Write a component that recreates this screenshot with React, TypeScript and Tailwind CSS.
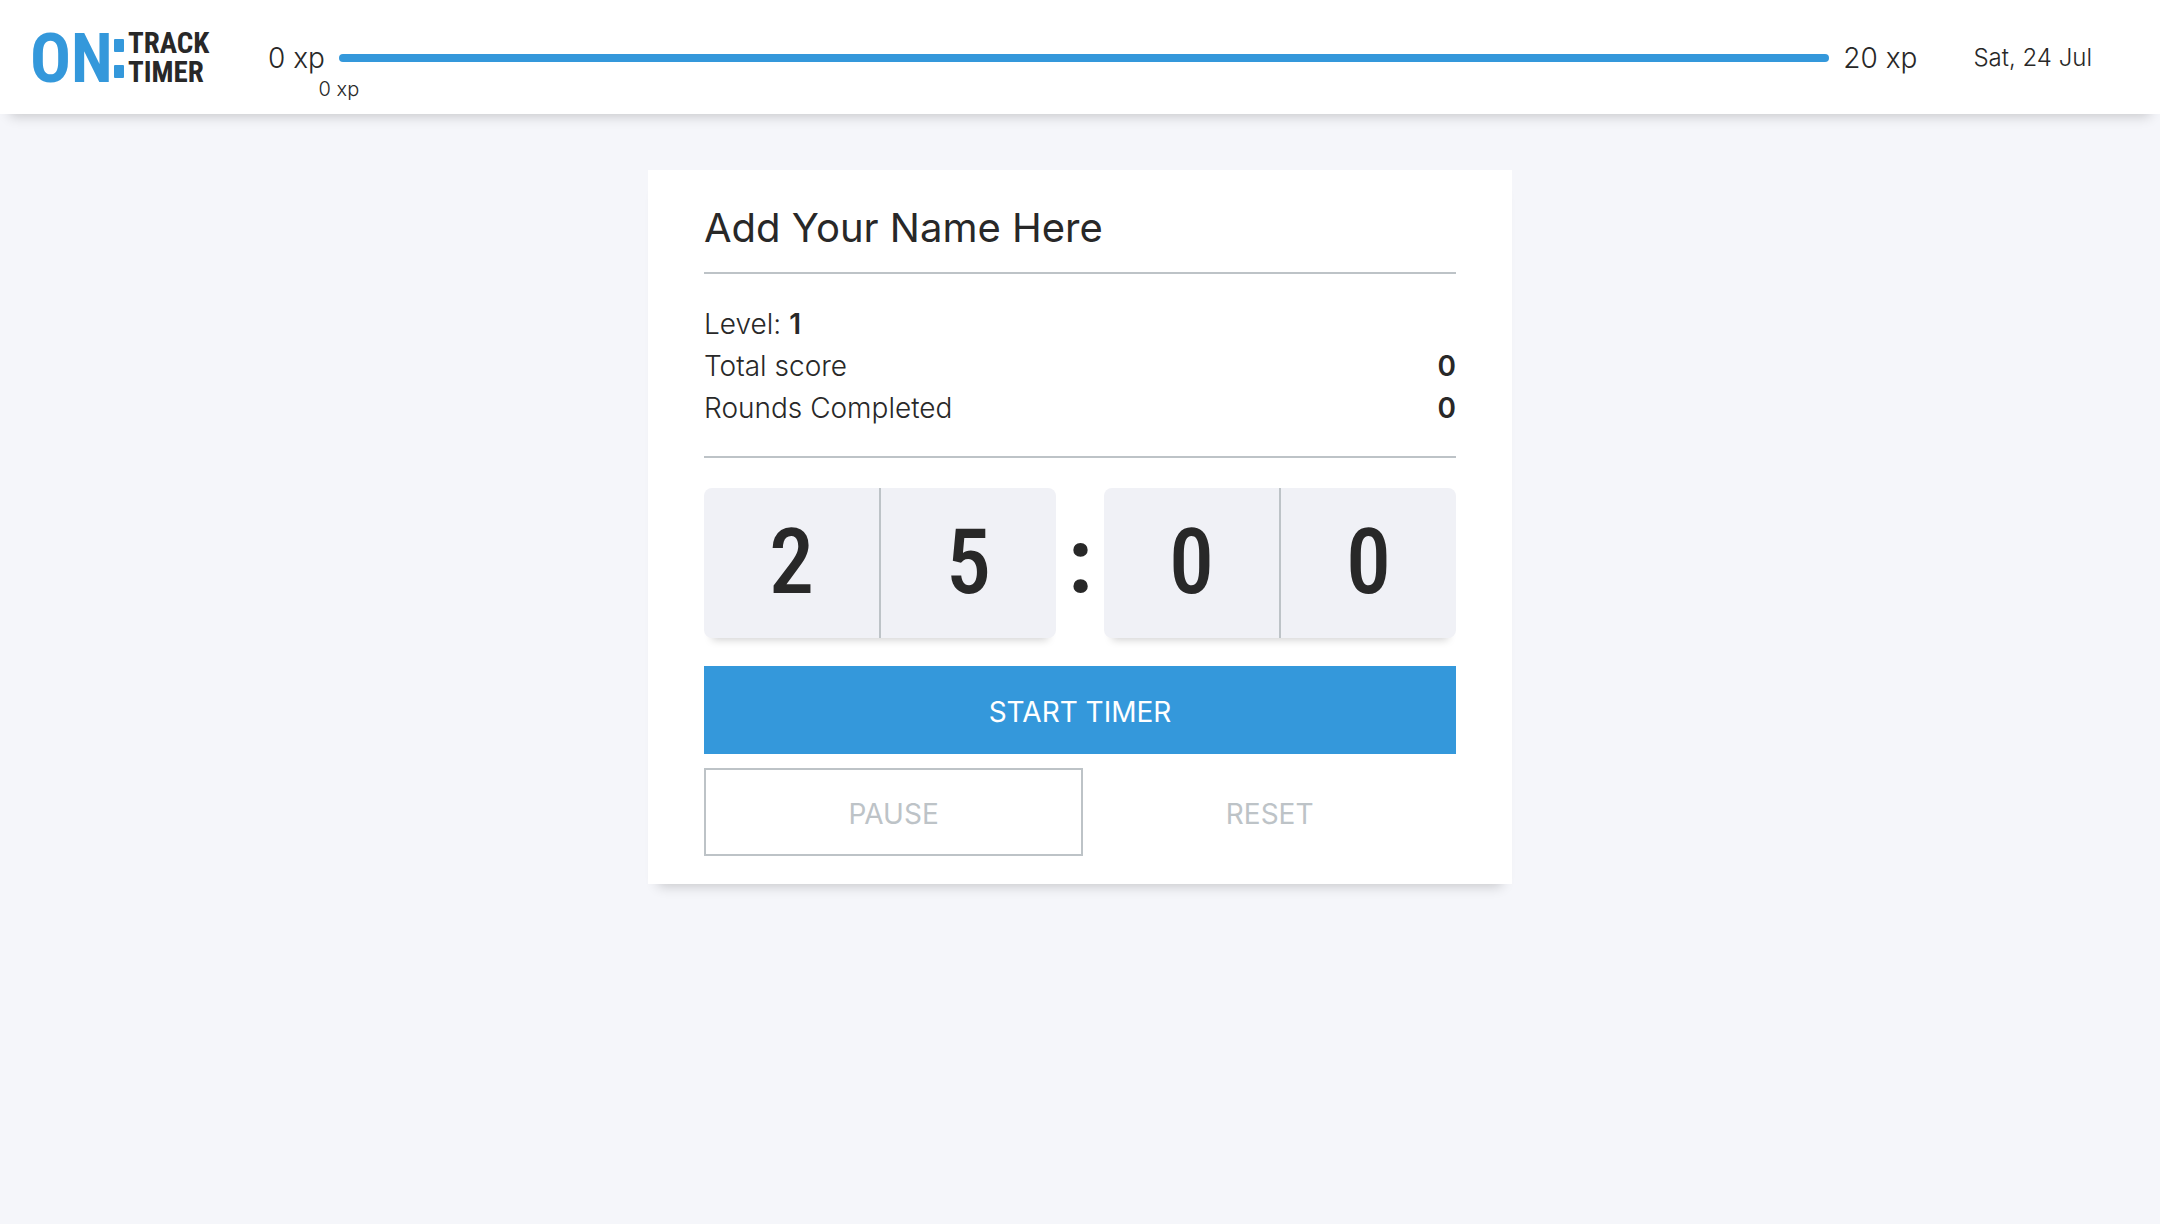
function Logo() {
  return (
    <a href="#" aria-label="On:Track Timer" className="flex shrink-0">
      <svg width="182" height="84" viewBox="0 0 182 84" aria-hidden="true" className="font-['Roboto_Condensed','Roboto',sans-serif] font-bold">
        <text x="0" y="66" fontSize="68" fill="#3498db">ON</text>
        <rect x="84" y="23" width="10" height="13" rx="1" fill="#3498db" />
        <rect x="84" y="49" width="10" height="13" rx="1" fill="#3498db" />
        <text x="98" y="37" fontSize="29" fill="#282828">TRACK</text>
        <text x="98" y="66" fontSize="29" fill="#282828">TIMER</text>
      </svg>
    </a>
  );
}

function Stat({ label, value }: { label: string; value: number }) {
  return (
    <div className="flex justify-between">
      <dt>{label}</dt>
      <dd className="font-semibold">{value}</dd>
    </div>
  );
}

function DigitPair({ digits }: { digits: string }) {
  return (
    <div className="flex h-[150px] flex-1 rounded-lg bg-[#f0f1f6] shadow-[0_10px_8px_-8px_rgba(0,0,0,0.18)]">
      <span className="flex flex-1 items-center justify-center border-r-2 border-[#bdc3c7]">{digits[0]}</span>
      <span className="flex flex-1 items-center justify-center">{digits[1]}</span>
    </div>
  );
}

export default function App() {
  return (
    <div className="min-h-screen bg-[#f5f6fa] font-['Inter',sans-serif] text-[28px] leading-[42px] font-light text-[#282828]">
      <header className="flex h-[114px] items-center bg-white pt-[2px] pr-[68px] pl-[30px] shadow-[0_12px_12px_-10px_rgba(0,0,0,0.2)]">
        <Logo />
        <div className="ml-14 flex flex-1 items-center gap-[14px]">
          <span>0 xp</span>
          <div
            role="progressbar"
            aria-label="Experience"
            aria-valuemin={0}
            aria-valuemax={20}
            aria-valuenow={0}
            className="relative h-2 flex-1 rounded-full bg-[#3498db]"
          >
            <span className="absolute top-[14px] left-0 -translate-x-1/2 text-xl leading-[42px] whitespace-nowrap">0 xp</span>
          </div>
          <span>20 xp</span>
        </div>
        <time className="ml-14 text-2xl">Sat, 24 Jul</time>
      </header>
      <main className="mx-auto mt-14 w-full max-w-[864px] bg-white px-14 py-7 shadow-[0_12px_12px_-10px_rgba(0,0,0,0.2)]">
        <h1 className="border-b-2 border-[#bdc3c7] pb-[14px] text-[40px] leading-[60px] font-normal">Add Your Name Here</h1>
        <dl className="border-b-2 border-[#bdc3c7] pt-[29px] pb-[27px]">
          <div className="flex gap-2">
            <dt>Level:</dt>
            <dd className="font-semibold">1</dd>
          </div>
          <Stat label="Total score" value={0} />
          <Stat label="Rounds Completed" value={0} />
        </dl>
        <div role="timer" className="mt-[30px] flex items-center font-['Roboto_Condensed','Roboto',sans-serif] text-[90px] leading-none font-medium">
          <DigitPair digits="25" />
          <span className="w-12 text-center font-bold">:</span>
          <DigitPair digits="00" />
        </div>
        <button type="button" className="mt-7 h-[88px] w-full bg-[#3498db] pt-1 font-normal text-white">START TIMER</button>
        <div className="mt-[14px] flex text-[#bdc3c7]">
          <button type="button" className="h-[88px] flex-auto border-2 border-[#bdc3c7] pt-1 font-normal">PAUSE</button>
          <button type="button" className="h-[88px] flex-auto pt-1 font-normal">RESET</button>
        </div>
      </main>
    </div>
  );
}
